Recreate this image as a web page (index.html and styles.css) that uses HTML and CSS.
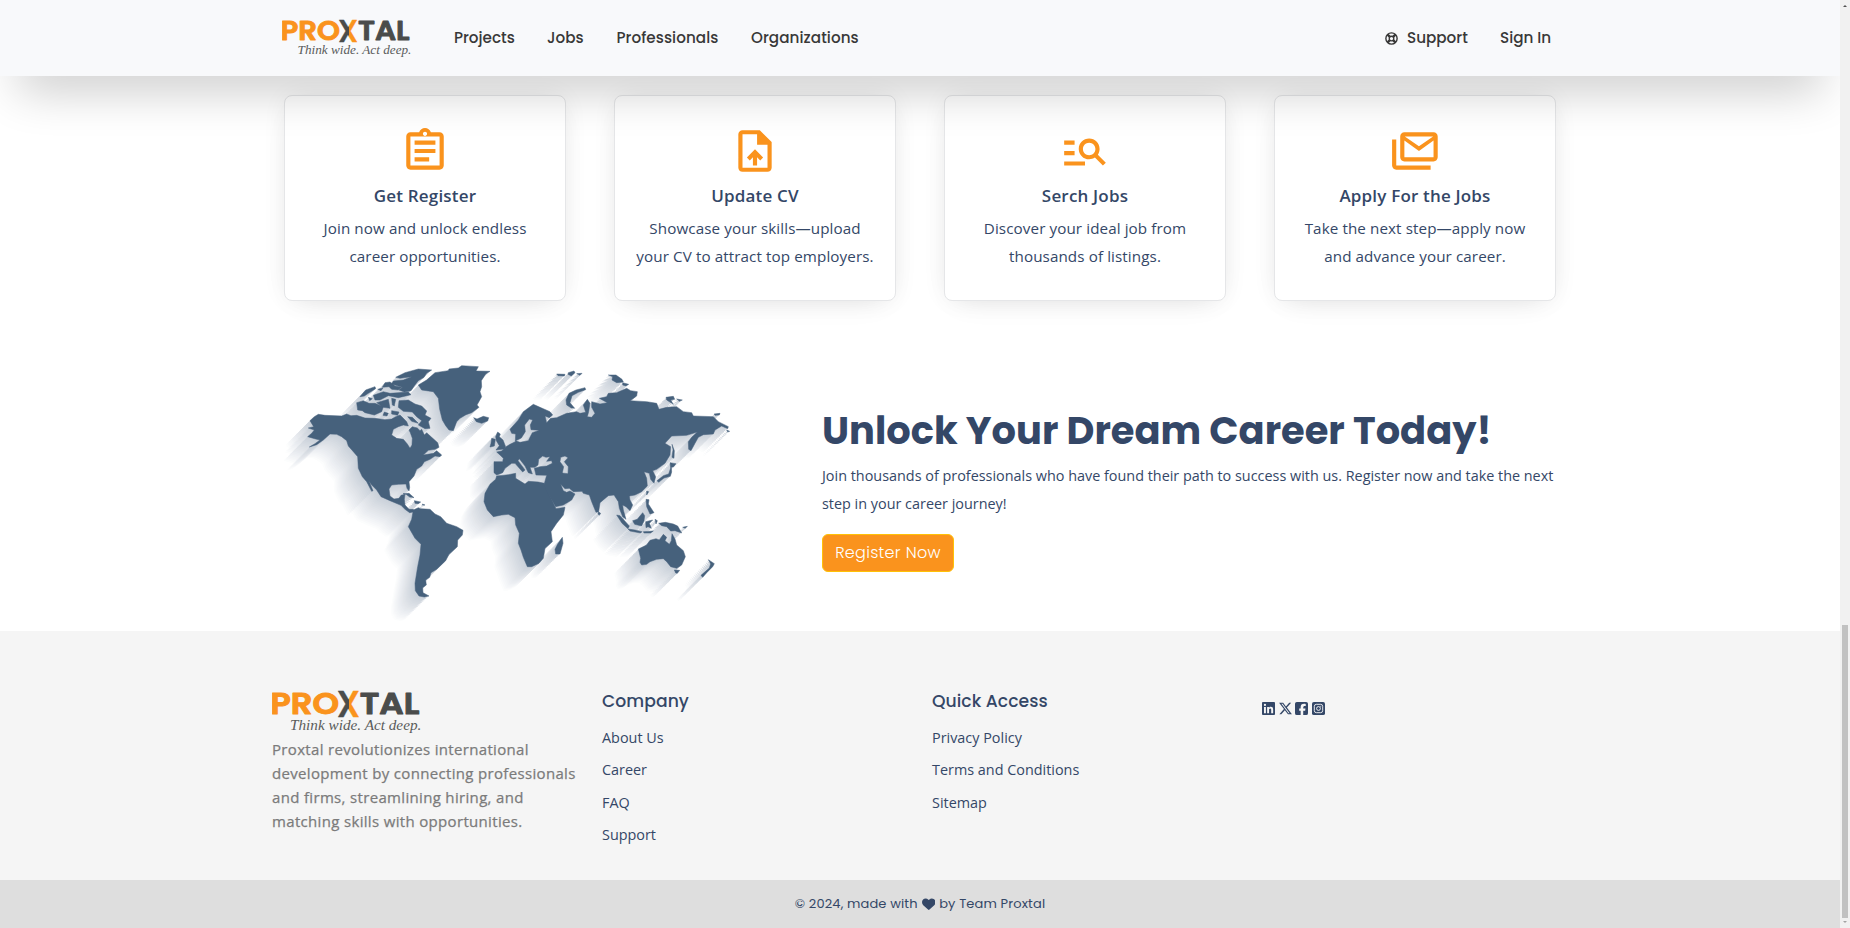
FILE: index.html
```html
<!DOCTYPE html>
<html lang="en">
<head>
<meta charset="utf-8">
<title>Proxtal</title>
<link rel="stylesheet" href="styles.css">
</head>
<body>
<svg class="defs" aria-hidden="true">
  <defs>
    <linearGradient id="xfill" x1="0" x2="1" y1="0" y2="0">
      <stop offset=".52" stop-color="#4a4c4b"/><stop offset=".52" stop-color="#fa931d"/>
    </linearGradient>
    <symbol id="logo" viewBox="0 0 450 135">
      <g class="logo-word">
        <text x="-5" y="73" textLength="206" lengthAdjust="spacingAndGlyphs" fill="#fa931d" stroke="#fa931d">PRO</text>
        <text x="194" y="81" class="logo-x" textLength="70" lengthAdjust="spacingAndGlyphs" fill="url(#xfill)" stroke="url(#xfill)">X</text>
        <text x="263" y="73" textLength="179" lengthAdjust="spacingAndGlyphs" fill="#4a4c4b" stroke="#4a4c4b">TAL</text>
      </g>
      <text class="logo-tag" x="54" y="121" textLength="394" lengthAdjust="spacingAndGlyphs">Think wide. Act deep.</text>
    </symbol>
  </defs>
</svg>
<div class="page">
  <header class="header">
    <nav class="nav">
      <svg class="logo logo-sm"><use href="#logo"/></svg>
      <a class="n1">Projects</a><a class="n2">Jobs</a><a class="n3">Professionals</a><a class="n4">Organizations</a>
      <span class="spacer"></span>
      <svg class="ring" viewBox="0 0 24 24"><g fill="none" stroke="currentColor"><circle cx="12" cy="12" r="10.4" stroke-width="2.6"/><circle cx="12" cy="12" r="4.2" stroke-width="2.4"/><path stroke-width="4.5" d="M4.8 4.8 9 9M19.200 4.800 15 9M4.800 19.200 9 15M19.200 19.200 15 15"/></g></svg>
      <a class="n5">Support</a><a class="n6">Sign In</a>
    </nav>
  </header>
  <main>
    <section class="cards">
      <article class="card">
        <svg class="icon" viewBox="0 0 24 24"><path d="M7 15h7v2H7zm0-4h10v2H7zm0-4h10v2H7zm12-4h-4.180C14.400 1.840 13.300 1 12 1c-1.300 0-2.400.84-2.820 2H5c-1.100 0-2 .9-2 2v14c0 1.100.9 2 2 2h14c1.100 0 2-.9 2-2V5c0-1.100-.9-2-2-2zm-7-.25c.55 0 1 .45 1 1s-.45 1-1 1-1-.45-1-1 .45-1 1-1zM19 19H5V5h14v14z"/></svg>
        <h3>Get Register</h3><p>Join now and unlock endless<br>career opportunities.</p>
      </article>
      <article class="card">
        <svg class="icon" viewBox="0 0 24 24"><path fill-rule="evenodd" d="M6 2h8.300L20 7.700V20c0 1.100-.9 2-2 2H6c-1.100 0-2-.9-2-2V4c0-1.100.9-2 2-2zm0 2v16h12V9h-5V4zM12 11.200l3.900 3.900-1.400 1.400-1.500-1.500v4h-2v-4l-1.500 1.500-1.400-1.400z"/></svg>
        <h3>Update CV</h3><p>Showcase your skills—upload<br>your CV to attract top employers.</p>
      </article>
      <article class="card">
        <svg class="icon" viewBox="0 0 24 24"><path d="M7 9H2V7h5v2zm0 3H2v2h5v-2zm13.590 7-3.830-3.830c-.8.52-1.740.83-2.760.83-2.760 0-5-2.240-5-5s2.240-5 5-5 5 2.240 5 5c0 1.020-.31 1.960-.83 2.750L22 17.590 20.590 19zM17 11c0-1.650-1.350-3-3-3s-3 1.350-3 3 1.350 3 3 3 3-1.350 3-3zM2 19h10v-2H2v2z"/></svg>
        <h3>Serch Jobs</h3><p>Discover your ideal job from<br>thousands of listings.</p>
      </article>
      <article class="card">
        <svg class="icon" viewBox="0 0 24 24"><path fill-rule="evenodd" d="M6.900 3h14c1.100 0 2 .9 2 2v10c0 1.100-.9 2-2 2h-14c-1.100 0-2-.9-2-2V5c0-1.100.9-2 2-2zm0 4v8h14V7l-7 5zm.2-2 6.800 4.700L20.700 5zM1 6.500h2V19h16.500v2H3c-1.100 0-2-.9-2-2z"/></svg>
        <h3>Apply For the Jobs</h3><p>Take the next step—apply now<br>and advance your career.</p>
      </article>
    </section>
    <section class="cta">
      <svg class="map" viewBox="0 0 1395 840">
        <defs>
          <g id="land">
            <path d="M105 212 118 200 130 193 150 196 200 198 215 192 228 197 245 196 270 204 300 205 330 209 350 207 362 200 375 195 385 205 395 215 400 228 385 225 370 230 355 238 350 255 365 265 385 268 397 282 405 295 411 285 412 265 406 248 402 240 412 230 427 234 435 242 440 238 448 255 455 248 470 262 488 278 492 292 480 298 460 301 445 315 458 313 475 310 485 302 500 315 495 320 480 318 465 328 448 335 440 348 425 358 417 378 402 395 404 412 402 423 396 415 393 402 370 403 350 405 342 417 345 438 357 447 372 445 378 436 390 433 388 448 390 465 402 478 415 478 418 485 404 488 390 478 378 466 345 452 318 440 305 420 290 405 282 393 294 422 290 424 275 395 262 380 250 355 248 320 235 305 220 288 215 272 200 260 185 253 165 252 145 270 125 284 103 291 120 281 135 270 122 267 98 260 110 250 118 240 100 234 116 230z"/>
            <path d="M430 105 455 90 480 68 520 62 522 57 550 54 560 47 610 50 603 63 645 64 632 72 619 92 620 110 615 125 620 140 606 165 612 172 590 188 573 194 555 205 545 215 535 242 522 240 512 227 502 210 494 178 490 145 475 125 440 120z"/>
            <path d="M596 203 606 207 625 199 641 203 638 213 620 220 604 215z"/>
            <path d="M362 82 390 68 430 57 470 60 455 70 447 82 430 92 420 105 408 122 388 126 372 120 382 112 350 102 355 93 385 90 410 80 375 85zM245 158 265 152 282 160 300 160 325 170 320 185 298 195 270 188 262 182 248 180zM255 140 272 120 300 110 302 116 280 130 268 138zM295 136 325 125 345 130 400 126 408 134 370 143 340 137 315 150 300 150zM305 158 340 148 345 175 325 172zM350 145 362 148 358 168 352 165zM330 98 345 96 360 108 380 112 370 120 350 118 342 110 322 112zM372 152 400 150 420 162 440 168 455 183 450 195 468 205 460 215 465 235 450 236 430 225 440 212 425 200 412 186 385 184 370 172zM398 200 412 202 430 220 410 214zM350 182 372 186 368 196 350 192zM280 142 292 146 284 152zM308 118 324 114 318 122zM328 186 340 190 336 198 324 196z"/>
            <path d="M384 431 402 430 417 443 404 441 395 434zM418 452 437 456 430 461 420 460zM442 462 450 465 443 466z"/>
            <path d="M415 480 430 473 437 476 465 478 480 492 497 500 515 520 545 530 564 541 562 555 548 570 547 590 522 613 512 632 485 658 468 668 464 682 452 690 454 705 443 713 444 728 462 738 448 741 432 738 421 722 420 700 428 650 435 615 438 583 420 565 400 530 410 508z"/>
            <path d="M665 378 700 374 722 370 722 385 750 402 760 394 790 396 808 400 815 418 828 445 843 476 870 472 865 495 845 520 828 545 832 575 810 595 805 625 792 640 770 650 757 650 745 622 738 600 730 580 733 550 722 525 720 503 700 493 680 495 655 500 637 480 627 455 630 430 645 403 662 388z"/>
            <path d="M862 562 864 580 855 612 842 612 840 598 848 582zM668 246 676 252 673 260 684 270 692 290 688 297 663 300 673 287 664 272 662 260zM650 265 661 268 658 288 645 291 648 280z"/>
            <g transform="translate(675 0)">
              <path fill-rule="evenodd" d="M-18 335 8 335 10 325 0 315-10 306 5 303 18 290 30 283 46 275 47 252 35 250 30 238 55 210 70 185 100 163 120 172 150 185 158 195 148 203 135 198 140 218 152 205 170 203 200 190 230 185 240 190 257 187 250 165 262 148 270 160 266 185 262 200 275 202 285 190 275 172 275 155 300 162 322 158 298 145 320 140 325 130 350 128 380 115 392 122 412 125 410 138 390 152 440 155 470 160 477 178 500 172 530 170 550 185 575 188 580 198 640 200 655 215 685 230 683 236 665 228 645 240 640 252 610 254 595 262 585 280 573 302 566 298 565 275 575 262 592 246 560 256 515 258 495 280 512 290 510 315 495 340 470 358 458 362 467 380 462 400 452 388 448 370 432 365 440 385 442 408 425 425 405 435 388 438 390 450 398 465 390 482 378 470 368 465 370 480 378 508 368 500 358 475 355 455 342 435 325 437 300 458 296 485 288 487 275 455 268 435 250 430 246 424 220 425 208 415 195 416 182 403 190 422 200 427 210 423 225 432 215 450 190 465 167 470 155 450 140 425 132 404 140 376 108 375 103 355 120 350 140 348 157 340 155 332 140 334 150 320 138 322 128 318 116 328 114 345 105 352 90 352 97 372 85 368 75 348 58 326 54 332 75 360 68 366 45 340 35 340 15 355 8 368-10 375-18 368zM182 322 195 318 204 323 193 335 205 350 204 371 187 369 191 350 180 335zM88 207 98 210 91 225 93 239 118 241 97 248 90 262 85 272 60 277 47 272 64 264 76 245 74 225z"/>
              <path d="M255 113 257 119 235 127 216 137 210 158 224 175 214 174 200 165 198 150 207 130 228 120zM170 72 195 73 193 78 174 77zM205 68 222 63 225 68 214 78 204 73zM230 71 246 70 240 76zM325 75 348 75 366 88 370 96 350 98 336 90 338 80zM368 98 386 103 378 108 368 105zM498 142 520 139 524 148 512 150 520 163 500 150zM530 147 547 150 538 154zM642 192 660 190 658 195 645 196zM680 240 689 244 683 246z"/>
              <path d="M516 283 523 302 522 325 516 322 519 300zM510 338 528 341 521 350 514 352 515 366 511 379 492 384 476 397 471 392 490 377 506 372 512 354zM440 423 446 425 440 435zM438 448 447 449 445 462 462 488 450 492 440 470zM398 512 412 508 428 488 434 497 432 513 425 528 404 523zM350 495 360 497 388 528 384 536 366 520zM384 537 405 540 426 545 422 549 390 543zM430 545 460 543 452 549 432 549zM437 515 458 510 448 520 454 535 444 530 438 533zM465 508 472 512 468 522zM476 520 496 517 520 522 533 528 545 549 525 542 512 543 500 530 485 527zM548 532 562 529 556 535zM295 485 302 490 298 496 294 492z"/>
              <path d="M415 597 440 585 450 571 468 566 478 570 490 553 500 562 495 572 508 583 514 572 516 551 525 567 530 585 550 602 556 620 545 645 530 655 512 650 500 635 490 626 470 628 450 635 440 643 425 645 420 637 422 625zM523 660 539 661 532 670 527 669zM625 629 643 641 638 650 620 668 608 682 603 676 628 654 632 642z"/>
            </g>
          </g>
        </defs>
        <g class="map-shadow">
          <use href="#land" x="-72" y="72" fill="#fcfdfd"/>
          <use href="#land" x="-68" y="68" fill="#f9fafb"/>
          <use href="#land" x="-64" y="64" fill="#f6f7f9"/>
          <use href="#land" x="-60" y="60" fill="#f3f5f7"/>
          <use href="#land" x="-56" y="56" fill="#f0f2f5"/>
          <use href="#land" x="-52" y="52" fill="#edeff3"/>
          <use href="#land" x="-48" y="48" fill="#eaedf1"/>
          <use href="#land" x="-44" y="44" fill="#e7eaef"/>
          <use href="#land" x="-40" y="40" fill="#e5e8ec"/>
          <use href="#land" x="-36" y="36" fill="#e2e5ea"/>
          <use href="#land" x="-32" y="32" fill="#dfe3e8"/>
          <use href="#land" x="-28" y="28" fill="#dce0e6"/>
          <use href="#land" x="-24" y="24" fill="#d9dee4"/>
          <use href="#land" x="-20" y="20" fill="#d6dbe2"/>
          <use href="#land" x="-16" y="16" fill="#d3d9e0"/>
          <use href="#land" x="-12" y="12" fill="#d0d6de"/>
          <use href="#land" x="-8" y="8" fill="#cdd4dc"/>
          <use href="#land" x="-4" y="4" fill="#cad1da"/>
        </g>
        <use class="map-land" href="#land"/>
      </svg>
      <div class="cta-text">
        <h2>Unlock Your Dream Career Today!</h2>
        <p>Join thousands of professionals who have found their path to success with us. Register now and take the next<br>step in your career journey!</p>
        <a class="btn">Register Now</a>
      </div>
    </section>
  </main>
  <footer class="footer">
    <div class="foot-cols">
      <div class="about"><svg class="logo logo-lg"><use href="#logo"/></svg>
        <p>Proxtal revolutionizes international<br>development by connecting professionals<br>and firms, streamlining hiring, and<br>matching skills with opportunities.</p></div>
      <div class="links"><h4>Company</h4><a>About Us</a><a>Career</a><a>FAQ</a><a>Support</a></div>
      <div class="links"><h4>Quick Access</h4><a>Privacy Policy</a><a>Terms and Conditions</a><a>Sitemap</a></div>
      <div class="social">
        <svg viewBox="0 0 448 448"><path fill-rule="evenodd" d="M32 0h384q32 0 32 32v384q0 32-32 32H32q-32 0-32-32V32Q0 0 32 0zM69 170v214h66V170zM102 64a38 38 0 1 0 0 77 38 38 0 1 0 0-77zM177 170v214h66V278c0-28 5-55 40-55 34 0 34 32 34 57v104h67V267c0-58-13-102-80-102-32 0-54 18-63 34h-1v-29z"/></svg>
        <svg viewBox="24 8 466 432"><path fill-rule="evenodd" d="M389 16h71L306 192l181 240H345L234 287 107 432H37l164-188L27 16h146l100 133zM364 390h39L151 56h-42z"/></svg>
        <svg viewBox="0 0 448 448"><path d="M64 0h320q64 0 64 64v320q0 64-64 64H283V302h67l11-78h-78v-28c0-41 16-57 57-57 13 0 24 0 30 1V69c-11-3-39-6-54-6-83 0-121 39-121 124v37h-51v78h51v146H64q-64 0-64-64V64Q0 0 64 0z"/></svg>
        <svg viewBox="0 0 448 448"><rect width="448" height="448" rx="64" fill="currentColor"/><g fill="none" stroke="#f5f5f5" stroke-width="32"><rect x="80" y="80" width="288" height="288" rx="70"/><circle cx="224" cy="224" r="66"/></g><circle cx="302" cy="146" r="18" fill="#f5f5f5"/></svg>
      </div>
    </div>
    <div class="copy"><span>© 2024, made with</span><svg viewBox="0 0 512 448"><path d="M47 268 228 437q28 22 56 0L465 268q47-45 47-117C512 40 375-40 268 60l-12 12-12-12C137-40 0 40 0 151q0 72 47 117z"/></svg><span>by Team Proxtal</span></div>
  </footer>
</div>
<div class="scrollbar"><i class="up"></i><i class="thumb"></i><i class="down"></i></div>
</body>
</html>
```
FILE: styles.css
```css
* { box-sizing: border-box; }
body { margin: 0; width: 1850px; height: 928px; overflow: hidden; display: flex; background: #fff; color: #344767; font-family: "Open Sans", sans-serif; }
.defs { position: absolute; width: 0; height: 0; }
.page { width: 1840px; height: 928px; display: flex; flex-direction: column; overflow: hidden; }
h2, h3, h4, p { margin: 0; }
.header { position: relative; z-index: 2; height: 76px; flex: none; background: #f8f9fb; box-shadow: 0 30px 48px -18px rgba(0,0,0,.24); }
.nav { width: 1320px; height: 76px; margin: 0 auto; padding: 0 28px 0 22px; display: flex; align-items: center; font: 500 15.2px/24px Poppins, Inter, sans-serif; color: #383838; }
.nav a { white-space: nowrap; }
.nav .n1 { width: 61px; margin-left: 42px; }
.nav .n2 { width: 37px; margin-left: 32px; }
.nav .n3 { width: 102px; margin-left: 32.5px; letter-spacing: .06px; }
.nav .n4 { margin-left: 32.5px; letter-spacing: .06px; }
.spacer { flex: 1; }
.nav .ring { width: 13px; height: 13px; margin-right: 9px; }
.nav .n5 { width: 62px; }
.nav .n6 { width: 52px; margin-left: 31px; }
.logo-sm { width: 130px; height: 39px; }
.logo-lg { width: 150px; height: 45px; display: block; }
.logo-word { font: 600 91px Poppins, Inter, sans-serif; stroke-width: 3; stroke-linejoin: round; }
.logo-x { font-size: 112px; font-weight: 600; stroke-width: 1; }
.logo-tag { font: italic 400 44px "Liberation Serif", serif; fill: #5a5c5b; }
main { height: 555px; flex: none; }
.cards { width: 1320px; margin: 19px auto 0; display: grid; grid-template-columns: repeat(4, 1fr); }
.card { height: 206px; margin: 0 24px; padding-top: 30px; border: 1px solid #e5e6e8; border-radius: 8px; background: #fff; text-align: center; box-shadow: 0 10px 30px -14px rgba(0,0,0,.1), 0 0 28px -5px rgba(0,0,0,.09); }
.icon { width: 50px; height: 50px; display: block; margin: 0 auto 6px; fill: #fa931d; }
.card h3 { font-size: 17px; font-weight: 600; line-height: 28px; letter-spacing: .18px; }
.card p { font-size: 15.2px; line-height: 28px; letter-spacing: .1px; margin-top: 4px; white-space: nowrap; }
.cta { width: 1320px; margin: 49px auto 0; height: 281px; display: flex; }
.map { width: 465px; height: 280px; margin-left: 15px; overflow: visible; }
.map-land { fill: #46617c; stroke: #46617c; stroke-width: 1.5; }
.cta-text { margin-left: 82px; padding-top: 51px; }
.cta-text h2 { font: 700 38.4px/60px Poppins, Inter, sans-serif; white-space: nowrap; }
.cta-text p { font-size: 14.4px; line-height: 28px; margin-top: 1px; white-space: nowrap; }
.btn { display: flex; align-items: center; justify-content: center; width: 132px; height: 38px; margin-top: 16px; border: 1px solid #ffc107; border-radius: 6px; background: #fa931d; color: #fff; font: 300 16px/24px Poppins, Inter, sans-serif; letter-spacing: .3px; }
.footer { flex: 1; background: #f5f5f5; display: flex; flex-direction: column; }
.foot-cols { width: 1320px; height: 249px; margin: 0 auto; padding: 59px 0 0 12px; display: grid; grid-template-columns: repeat(4, 330px); }
.about p { font-size: 15px; line-height: 24px; letter-spacing: .33px; color: #7b7b7b; -webkit-text-stroke: .25px #7b7b7b; margin-top: 2px; white-space: nowrap; }
.links { display: flex; flex-direction: column; }
.links h4 { font: 500 17.2px/22px Poppins, Inter, sans-serif; letter-spacing: .05px; margin-bottom: 14px; }
.links a { font-size: 14.4px; line-height: 24px; margin-bottom: 8.400px; }
.social { display: flex; gap: 3.700px; padding-top: 12px; }
.social svg { width: 13px; height: 13px; fill: currentColor; }
.copy { height: 48px; background: #dedede; display: flex; align-items: center; justify-content: center; gap: 4px; font: 400 13px/20px Poppins, Inter, sans-serif; letter-spacing: .14px; }
.copy svg { width: 13.500px; height: 12px; fill: currentColor; }
.scrollbar { width: 10px; height: 928px; background: #f1f1f1; display: flex; flex-direction: column; align-items: center; }
.up, .down { width: 0; height: 0; border: 2px solid transparent; }
.up { margin-top: 3px; border-bottom-color: #505050; }
.down { margin-top: 3px; border-top-color: #a3a3a3; }
.thumb { width: 6px; height: 293px; margin-top: 618px; background: #c1c1c1; }
```
